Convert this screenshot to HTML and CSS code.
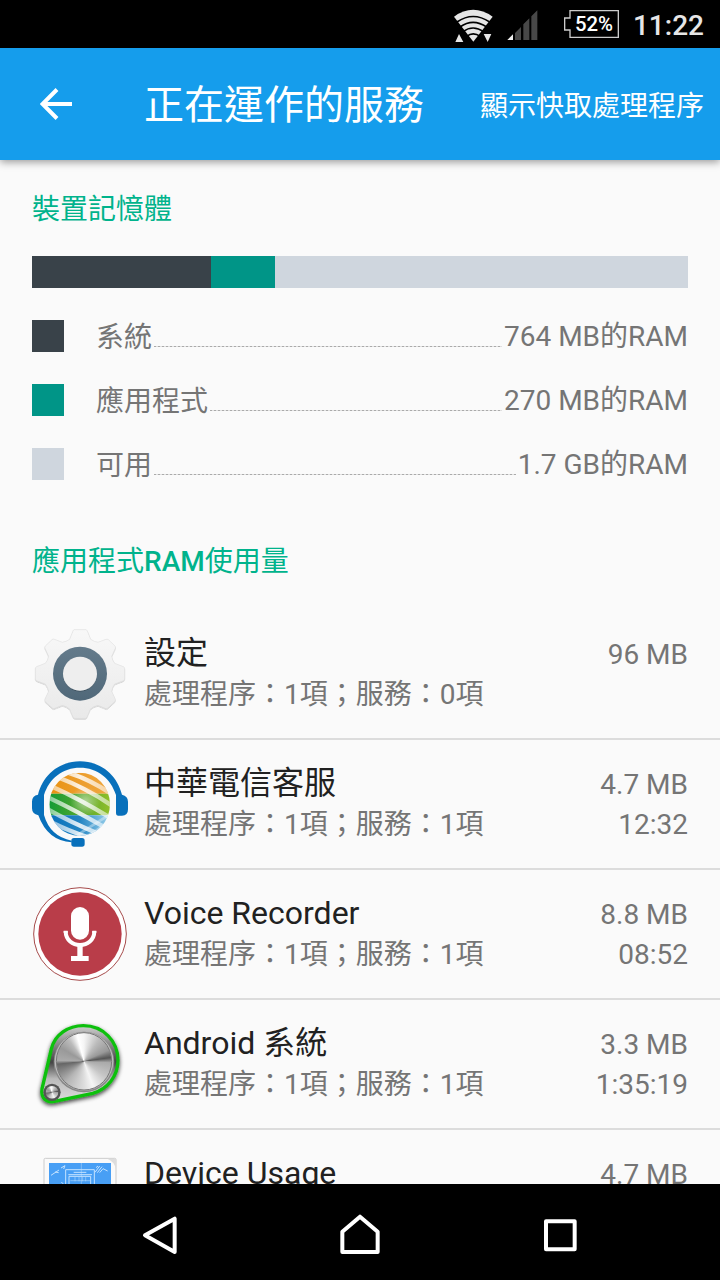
FILE: index.html
```html
<!DOCTYPE html>
<html lang="zh-Hant">
<head>
    <meta charset="UTF-8">
    <meta name="viewport" content="width=device-width, initial-scale=1.0">
    <title>正在運作的服務</title>
    <link rel="stylesheet" href="styles.css">
</head>
<body>

    <div class="status-bar">
        <svg class="status-icons" viewBox="0 0 540 144">
            <!-- WiFi -->
            <path d="M42 50Q99 9 158 50L100 125Z" fill="#e6e6e6"/>
            <g fill="none" stroke="#000" stroke-width="5">
                <path d="M51 66Q99 33 149 66"/>
                <path d="M60 81Q99 53 140 81"/>
                <path d="M69 95Q99 73 131 95"/>
                <path d="M80 109Q99 94 121 109"/>
            </g>
            <path d="M46 126L57 102L70 126ZM131 102H154L143 126Z" fill="#e6e6e6"/>
            <!-- Signal -->
            <path d="M225 99L243 81V120H225ZM250 73L268 55V120H250ZM274 49L292 31V120H274Z" fill="#484848"/>
            <path d="M202 120L219 103V120Z" fill="#eee"/>
            <!-- Akku -->
            <path d="M390 32H535V112H390V90H374V54H390Z" fill="none" stroke="#ccc" stroke-width="4"/>
            <text x="462" y="94" class="battery-text">52%</text>
        </svg>
        <span class="time">11:22</span>
    </div>

    <header class="toolbar">
        <svg class="back" viewBox="0 0 32 32">
            <path d="M32 16H3M17 1.5L2.5 16L17 30.5" fill="none" stroke="#fff" stroke-width="4"/>
        </svg>
        <h1>正在運作的服務</h1>
        <span class="action">顯示快取處理程序</span>
    </header>

    <main>
        <h2>裝置記憶體</h2>

        <div class="memory-bar">
            <div class="system" style="width: 27.3%"></div>
            <div class="apps" style="width: 9.7%"></div>
        </div>

        <div class="legend">
            <div class="legend-row">
                <i class="swatch system"></i>
                <span class="label">系統</span>
                <i class="dots"></i>
                <span class="amount">764 MB的RAM</span>
            </div>
            <div class="legend-row">
                <i class="swatch apps"></i>
                <span class="label">應用程式</span>
                <i class="dots"></i>
                <span class="amount">270 MB的RAM</span>
            </div>
            <div class="legend-row">
                <i class="swatch free"></i>
                <span class="label">可用</span>
                <i class="dots"></i>
                <span class="amount">1.7 GB的RAM</span>
            </div>
        </div>

        <h2 class="usage-title">應用程式<b>RAM</b>使用量</h2>

        <ul class="services">
            <li>
                <svg class="icon" viewBox="36 48 288 288">
                    <defs>
                        <linearGradient id="gear" x1="0" y1="0" x2="0" y2="1">
                            <stop offset="0" stop-color="#f8f8f8"/>
                            <stop offset="1" stop-color="#e9e9e9"/>
                        </linearGradient>
                        <linearGradient id="ring" x1="0" y1="0" x2="0" y2="1">
                            <stop offset="0" stop-color="#647b8b"/>
                            <stop offset="1" stop-color="#506879"/>
                        </linearGradient>
                        <filter id="shade" x="-20%" y="-20%" width="140%" height="140%">
                            <feDropShadow dx="0" dy="2" stdDeviation="2" flood-opacity=".3"/>
                        </filter>
                    </defs>
                    <path filter="url(#shade)" fill="url(#gear)" stroke="#dedede" stroke-width="1.5" stroke-linejoin="round" d="M163 59H197Q200 59 202 63L212 88Q223 96 234 97L258 88Q262 87 265 89L285 108Q287 111 286 115L275 139Q277 151 284 160L310 170Q314 172 314 176V206Q314 210 310 212L284 222Q276 232 275 244L286 268Q287 272 284 275L263 294Q260 297 256 295L234 286Q221 288 211 297L201 321Q199 325 195 325H166Q161 325 159 321L149 297Q139 288 127 286L104 295Q100 297 97 294L76 275Q74 272 75 267L86 244Q84 232 76 222L50 212Q46 210 46 206V176Q46 172 50 170L76 160Q84 151 86 139L75 115Q73 111 76 108L96 89Q99 86 103 88L127 97Q139 95 149 88L159 63Q160 59 163 59Z"/>
                    <circle cx="180" cy="191" r="81" fill="url(#ring)"/>
                    <circle cx="180" cy="191" r="51" fill="#eee" filter="url(#shade)"/>
                </svg>
                <div class="info">
                    <h3>設定</h3>
                    <p>處理程序：1項；服務：0項</p>
                </div>
                <div class="values">
                    <span>96 MB</span>
                </div>
            </li>

            <li>
                <svg class="icon" viewBox="36 48 288 288">
                    <defs>
                        <clipPath id="globe"><ellipse cx="179" cy="193" rx="91" ry="95"/></clipPath>
                        <linearGradient id="orange"><stop stop-color="#e99212"/><stop offset="1" stop-color="#efa843"/></linearGradient>
                        <linearGradient id="green"><stop stop-color="#149b36"/><stop offset=".55" stop-color="#58a82c"/><stop offset="1" stop-color="#91bf2a"/></linearGradient>
                        <linearGradient id="blue"><stop stop-color="#0870bb"/><stop offset=".5" stop-color="#2385c3"/><stop offset="1" stop-color="#9ed3ed"/></linearGradient>
                        <linearGradient id="stripe" gradientUnits="userSpaceOnUse" x1="88" y1="0" x2="270" y2="0"><stop stop-color="#fff" stop-opacity=".5"/><stop offset=".5" stop-color="#fff" stop-opacity=".85"/><stop offset="1" stop-color="#fff" stop-opacity=".5"/></linearGradient>
                        <radialGradient id="glow"><stop stop-color="#fff" stop-opacity=".5"/><stop offset="1" stop-color="#fff" stop-opacity="0"/></radialGradient>
                    </defs>
                    <g clip-path="url(#globe)">
                        <path d="M88 98H270V161H88Z" fill="url(#orange)"/>
                        <path d="M88 161H270V226H88Z" fill="url(#green)"/>
                        <path d="M88 226H270V289H88Z" fill="url(#blue)"/>
                        <g fill="none" stroke="url(#stripe)" stroke-width="13">
                            <path d="M142 97Q212 119 271 160"/>
                            <path d="M113 112Q198 144 274 196"/>
                            <path d="M92 138Q181 178 270 233"/>
                            <path d="M86 173Q165 210 256 263"/>
                            <path d="M84 208Q146 244 236 281"/>
                            <path d="M93 246Q145 273 205 292"/>
                        </g>
                        <circle cx="195" cy="184" r="45" fill="url(#glow)"/>
                        <g stroke="#fff" stroke-opacity=".35" stroke-width="8">
                            <path d="M170 286L272 222M190 296L278 240"/>
                        </g>
                    </g>
                    <g fill="#0870bb">
                        <path d="M54 164C69 105 117 64 180 64S291 105 306 164Q324 168 324 185V208Q324 227 306 227H294Q288 227 288 220V165C272 115 232 83 180 83S88 115 72 165V225Q90 289 155 302V307Q83 303 55 226Q36 222 36 205V185Q36 167 54 164Z"/>
                        <rect x="154" y="294" width="40" height="26" rx="8"/>
                    </g>
                </svg>
                <div class="info">
                    <h3>中華電信客服</h3>
                    <p>處理程序：1項；服務：1項</p>
                </div>
                <div class="values">
                    <span>4.7 MB</span>
                    <span>12:32</span>
                </div>
            </li>

            <li>
                <svg class="icon" viewBox="36 48 288 288">
                    <circle cx="180" cy="192" r="139" fill="#fff" stroke="#a64b4b" stroke-width="3"/>
                    <circle cx="180" cy="192" r="125" fill="#b93d49"/>
                    <rect x="153" y="111" width="54" height="98" rx="27" fill="#fff"/>
                    <path d="M137 183C137 239 223 239 223 183M180 226V262" fill="none" stroke="#fff" stroke-width="12"/>
                    <path d="M172 226H188V258H206V273H153V258H172ZM131 182H143V189H131ZM217 182H229V189H217Z" fill="#fff"/>
                </svg>
                <div class="info">
                    <h3>Voice Recorder</h3>
                    <p>處理程序：1項；服務：1項</p>
                </div>
                <div class="values">
                    <span>8.8 MB</span>
                    <span>08:52</span>
                </div>
            </li>

            <li>
                <svg class="icon" viewBox="36 48 288 288">
                    <defs>
                        <linearGradient id="plate" x1="0" y1="0" x2="0" y2="1">
                            <stop offset="0" stop-color="#d0d0d0"/>
                            <stop offset=".48" stop-color="#444"/>
                            <stop offset=".7" stop-color="#bbb"/>
                            <stop offset="1" stop-color="#ddd"/>
                        </linearGradient>
                        <filter id="knob-shadow" x="-20%" y="-20%" width="140%" height="140%">
                            <feDropShadow dx="0" dy="6" stdDeviation="6" flood-opacity=".75"/>
                        </filter>
                    </defs>
                    <path filter="url(#knob-shadow)" fill="url(#plate)" stroke="#0fc00f" stroke-width="10" stroke-linejoin="round" d="M66 267L94 147C104 104 145 77 190 77C250 77 294 124 294 181C294 229 262 267 218 280L103 304C78 309 62 293 66 267Z"/>
                    <circle cx="192" cy="186" r="91" fill="#888"/>
                    <circle cx="192" cy="184" r="88" fill="#bbb"/>
                    <foreignObject x="110" y="98" width="164" height="172">
                        <div class="knob"></div>
                    </foreignObject>
                    <ellipse cx="192" cy="184" rx="83" ry="86" fill="none" stroke="#777" stroke-width="3"/>
                    <circle cx="96" cy="277" r="26" fill="#555"/>
                    <foreignObject x="77" y="258" width="38" height="38">
                        <div class="knob"></div>
                    </foreignObject>
                </svg>
                <div class="info">
                    <h3>Android 系統</h3>
                    <p>處理程序：1項；服務：1項</p>
                </div>
                <div class="values">
                    <span>3.3 MB</span>
                    <span>1:35:19</span>
                </div>
            </li>

            <li>
                <svg class="icon" viewBox="36 78 288 288">
                    <rect x="72" y="115" width="216" height="240" rx="4" fill="#fafafa" stroke="#ccc" stroke-width="3"/>
                    <path d="M262 116H288V146Q282 124 262 116Z" fill="#ddd"/>
                    <rect x="87" y="129" width="186" height="210" fill="#489ff5"/>
                    <path d="M184 116V192" stroke="#fff" stroke-opacity=".3" stroke-width="3"/>
                    <g fill="none" stroke="#c4e3ff" stroke-width="3">
                        <path d="M137 196V149H223V196M145 164H216M161 157H199M147 196V169H212V196"/>
                        <path d="M93 166L117 150M105 156L116 158M123 144L135 137M131 147L135 137M225 157L239 138M232 158L246 140M239 158L249 146L263 153M228 143L234 138M124 186L130 192"/>
                        <path d="M151 182H210M165 170V184M177 170V184M188 170V184M197 170V184" stroke-opacity=".5"/>
                    </g>
                </svg>
                <div class="info">
                    <h3>Device Usage</h3>
                </div>
                <div class="values">
                    <span>4.7 MB</span>
                </div>
            </li>
        </ul>
    </main>

    <nav class="nav-bar">
        <svg viewBox="0 0 1440 288">
            <g fill="none" stroke="#fff" stroke-width="12" stroke-linejoin="round">
                <path d="M75 154L164 104V204Z"/>
                <path d="M667 143L720 98L773 143V204H667Z"/>
                <rect x="1278" y="112" width="86" height="84"/>
            </g>
        </svg>
    </nav>

</body>
</html>
```
FILE: styles.css
```css
* {
    box-sizing: border-box;
    margin: 0;
    padding: 0;
}

body {
    display: flex;
    flex-direction: column;
    height: 1280px;
    overflow: hidden;
    background: #fafafa;
    color: #757575;
    font-family: Roboto, "Noto Sans CJK TC", sans-serif;
    font-size: 28px;
}

h1, h2, h3 {
    font-weight: 400;
}

/* Statusleiste */
.status-bar {
    display: flex;
    justify-content: flex-end;
    flex: none;
    height: 48px;
    padding-right: 16px;
    background: #000;
}

.status-icons {
    width: 180px;
    height: 48px;
}

.battery-text {
    fill: #fff;
    font-size: 61px;
    font-weight: 500;
    text-anchor: middle;
}

.time {
    width: 84px;
    color: #e6e6e6;
    font-size: 28px;
    font-weight: 500;
    line-height: 51px;
    text-align: right;
    white-space: nowrap;
}

/* Kopfzeile */
.toolbar {
    display: flex;
    align-items: center;
    flex: none;
    height: 112px;
    padding: 0 16px 0 40px;
    background: #159dec;
    color: #fff;
    box-shadow: 0 2px 8px rgba(0, 0, 0, 0.4);
    z-index: 1;
}

.back {
    width: 32px;
    height: 32px;
    margin-right: 72px;
}

.toolbar h1 {
    flex: 1;
    padding-top: 4px;
    font-size: 40px;
    line-height: 60px;
}

.action {
    font-size: 28px;
}

main {
    flex: 1;
    min-height: 0;
    overflow: hidden;
    padding-top: 30px;
}

h2 {
    padding: 0 32px;
    color: #00b38c;
    font-size: 28px;
    line-height: 40px;
}

h2 b {
    font-weight: 500;
}

/* Speicher */
.memory-bar {
    display: flex;
    height: 32px;
    margin: 26px 32px 32px;
    background: #cfd6de;
}

.system {
    background: #394249;
}

.apps {
    background: #009587;
}

.free {
    background: #cfd6de;
}

.legend {
    display: grid;
    gap: 32px;
    padding: 0 32px;
}

.legend-row {
    display: flex;
    height: 32px;
    line-height: 32px;
}

.swatch {
    width: 32px;
    height: 32px;
    margin-right: 32px;
}

.label {
    padding-top: 2px;
}

.amount {
    padding-top: 1px;
}

.dots {
    flex: 1;
    height: 1px;
    margin: 26px 2px 0;
    background: repeating-linear-gradient(90deg, #aaa 0 2px, #e0e0e0 2px 4px);
}

.usage-title {
    margin-top: 62px;
}

/* Liste der Dienste */
.services {
    margin-top: 28px;
    list-style: none;
}

.services li {
    display: flex;
    height: 130px;
    padding: 16px 32px 0;
    border-bottom: 2px solid #dcdcdc;
}

.icon {
    width: 96px;
    height: 96px;
    margin-right: 16px;
    overflow: visible;
}

.info {
    flex: 1;
    padding-top: 7px;
}

.info h3 {
    color: #212121;
    font-size: 32px;
    line-height: 40px;
}

.info p {
    padding-top: 2px;
    line-height: 40px;
}

.values {
    display: flex;
    flex-direction: column;
    padding-top: 9px;
    line-height: 40px;
    text-align: right;
}

.knob {
    width: 100%;
    height: 100%;
    border-radius: 50%;
    background: conic-gradient(#f5f5f5 0deg, #ddd 15deg, #bbb 35deg, #999 65deg, #555 82deg, #aaa 93deg, #c5c5c5 125deg, #f5f5f5 160deg, #ddd 180deg, #b5b5b5 220deg, #777 255deg, #666 264deg, #aaa 272deg, #999 300deg, #bbb 325deg, #fff 345deg, #f5f5f5 360deg);
}

/* Navigation */
.nav-bar {
    flex: none;
    height: 96px;
    padding: 0 120px;
    background: #000;
}

.nav-bar svg {
    display: block;
    width: 480px;
    height: 96px;
}
```
